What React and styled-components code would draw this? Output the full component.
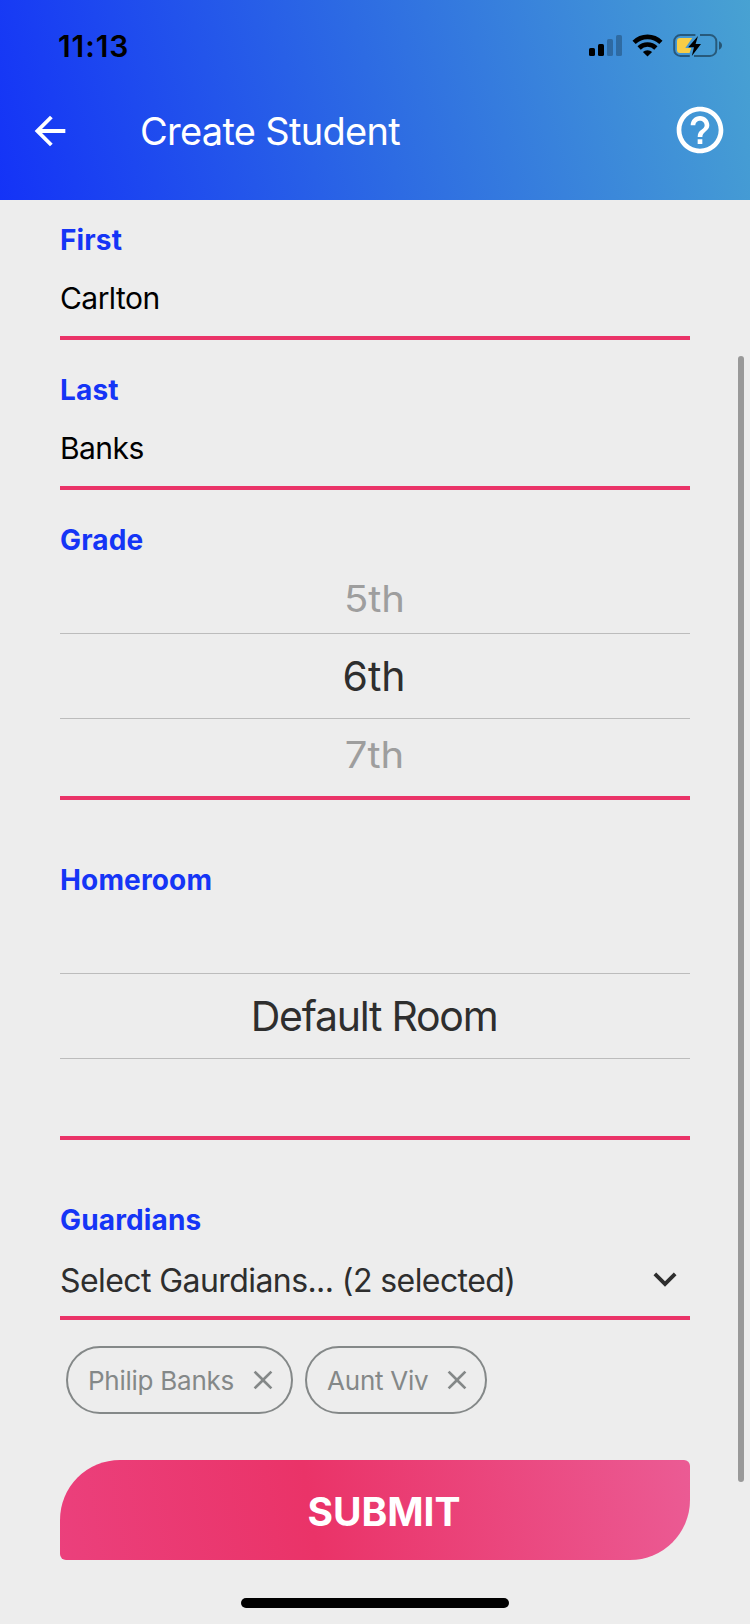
import React, { useState } from "react"
import styled, { createGlobalStyle } from 'styled-components';
import { MdArrowBack, MdClose, MdHelpOutline, MdKeyboardArrowDown } from 'react-icons/md';

const colors = {
	blue: '#1535f6',
	pink: '#ea3368',
	background: '#ededed',
	text: '#2e2e2e',
	chip: '#848888',
};

const GlobalStyle = createGlobalStyle`
	* {
		box-sizing: border-box;
	}
	body {
		margin: 0;
		background-color: ${colors.background};
		font-family: Inter, "Liberation Sans", sans-serif;
	}
	button, input {
		font-family: inherit;
		border: none;
		padding: 0;
		background: none;
		border-radius: 0;
		outline: none;
	}
	svg {
		display: block;
		flex: none;
	}
`;

const Screen = styled.div`
	position: relative;
	display: flex;
	flex-direction: column;
	width: 750px;
	height: 1624px;
	overflow: hidden;
	background-color: ${colors.background};
`;

const StatusIcons = () => (
	<svg width="136" height="28" viewBox="588 32 136 28">
		<rect x="589" y="48" width="6" height="8" rx="1.6" />
		<rect x="598" y="44" width="6" height="12" rx="1.6" />
		<rect x="607" y="39" width="6" height="17" rx="1.6" opacity="0.25" />
		<rect x="616" y="35" width="6" height="21" rx="1.6" opacity="0.25" />
		<g fill="none" stroke="#000" strokeWidth="4.6">
			<path d="M634.1 42.3a19.3 19.3 0 0 1 26.8 0" />
			<path d="M639.1 48a12 12 0 0 1 16.8 0" />
		</g>
		<path d="M642.9 52.1a6.6 6.6 0 0 1 9.2 0l-4.6 4.3z" />
		<path
			d="M695.4 35H680.5a6.3 6.3 0 0 0-6.3 6.3v8.4a6.3 6.3 0 0 0 6.3 6.3h9.3M700 35h10a6.3 6.3 0 0 1 6.3 6.3v8.4a6.3 6.3 0 0 1-6.3 6.3h-16"
			fill="none"
			stroke="#000"
			strokeOpacity="0.42"
			strokeWidth="2"
		/>
		<path d="M719 41.3c1.9.9 3 2.3 3 4.2s-1.1 3.3-3 4.2z" opacity="0.45" />
		<path d="M680 38h12.2l-6.9 10h5.9l-1.6 5H680a3 3 0 0 1-3-3v-9a3 3 0 0 1 3-3z" fill="#f7cd46" />
		<path d="M698 36l-9.8 11.2h5.8L691.8 56l9.2-12h-5.4z" />
	</svg>
);

const Header = ({ title }) => {
	return (
		<Header.Wrapper>
			<Header.Status>
				<Header.Time>11:13</Header.Time>
				<StatusIcons />
			</Header.Status>
			<Header.Bar>
				<Header.Button aria-label="Back"><MdArrowBack size={46} /></Header.Button>
				<Header.Title>{title}</Header.Title>
				<Header.Button aria-label="Help"><MdHelpOutline size={56} /></Header.Button>
			</Header.Bar>
		</Header.Wrapper>
	);
}
Header.Wrapper = styled.header`
	flex: none;
	height: 200px;
	background: linear-gradient(75deg, #1433f7 0%, #2d6be3 50%, #48a2d2 100%);
`;
Header.Status = styled.div`
	display: flex;
	justify-content: space-between;
	align-items: center;
	height: 88px;
	padding: 4px 26px 0 58px;
`;
Header.Time = styled.span`
	font-size: 30px;
	font-weight: 600;
	letter-spacing: 0.9px;
	color: black;
`;
Header.Bar = styled.div`
	display: flex;
	align-items: center;
	height: 84px;
	padding: 0 22px 0 27px;
`;
Header.Button = styled.button`
	color: white;

	&:first-child {
		padding-top: 2px;
	}
`;
Header.Title = styled.h1`
	flex: 1;
	margin: 2px 0 0 67px;
	font-size: 38px;
	font-weight: 400;
	letter-spacing: -0.7px;
	color: white;
`;

const Form = styled.form`
	display: flex;
	flex-direction: column;
	padding: 23px 60px 0;
`;

const Field = styled.div`
	display: flex;
	flex-direction: column;
	margin-bottom: ${props => props.$gap}px;
	border-bottom: 4px solid ${colors.pink};
`;

const Label = styled.label`
	height: 34px;
	line-height: 34px;
	font-size: 28px;
	font-weight: 700;
	letter-spacing: 0.15px;
	color: ${colors.blue};
`;

const Input = styled.input`
	height: 79px;
	padding-top: 2px;
	font-size: 30px;
	letter-spacing: -0.55px;
	color: black;
`;

const Picker = ({ before, selected, after, tracking = 0 }) => (
	<Picker.Wrapper>
		<Picker.Side>{before}</Picker.Side>
		<Picker.Selected $tracking={tracking}>{selected}</Picker.Selected>
		<Picker.Side>{after}</Picker.Side>
	</Picker.Wrapper>
);
Picker.Wrapper = styled.div`
	display: flex;
	flex-direction: column;
	height: 239px;
	padding-top: 6px;
	text-align: center;
`;
Picker.Side = styled.div`
	height: 70px;
	padding-right: 1px;
	line-height: 71px;
	font-size: 40px;
	color: #9e9e9e;
	transform: scaleY(0.92);
`;
Picker.Selected = styled.div`
	height: 86px;
	padding-right: 2px;
	line-height: 84px;
	border-top: 1px solid #bcbcbc;
	border-bottom: 1px solid #bcbcbc;
	font-size: 41px;
	letter-spacing: ${props => props.$tracking}px;
	color: ${colors.text};
`;

const Select = styled.button`
	display: flex;
	justify-content: space-between;
	align-items: center;
	height: 79px;
	padding: 4px 2px 0 0;
	font-size: 32px;
	letter-spacing: -0.58px;
	color: ${colors.text};
`;
Select.Value = styled.span`
	padding-top: 3px;
`;

const Chips = styled.div`
	display: flex;
	gap: 12px;
	height: 68px;
	margin: 0 6px 46px;
`;

const Chip = styled.button`
	display: flex;
	align-items: center;
	gap: 13px;
	padding: 0 12px 0 20px;
	border: 2px solid ${colors.chip};
	border-radius: 34px;
	font-size: 26px;
	letter-spacing: -0.25px;
	color: ${colors.chip};
`;

const Submit = styled.button`
	height: 100px;
	padding: 2px 0 0 18px;
	border-radius: 60px 6px 60px 6px;
	background: linear-gradient(81deg, #eb407c 0%, #ea3368 40%, #eb5b94 100%);
	font-size: 39px;
	font-weight: 700;
	color: white;
`;

const ScrollBar = styled.div`
	position: absolute;
	top: 356px;
	right: 6px;
	width: 6px;
	height: 1126px;
	border-radius: 3px;
	background-color: #999999;
`;

const HomeIndicator = styled.div`
	align-self: center;
	width: 268px;
	height: 10px;
	margin-top: 38px;
	border-radius: 5px;
	background-color: black;
`;

const App = () => {
	const [first, setFirst] = useState('Carlton');
	const [last, setLast] = useState('Banks');
	const [guardians, setGuardians] = useState(['Philip Banks', 'Aunt Viv']);

	return (
		<Screen>
			<GlobalStyle />
			<Header title="Create Student" />
			<Form onSubmit={e => e.preventDefault()}>
				<Field $gap={33}>
					<Label htmlFor="first">First</Label>
					<Input id="first" value={first} onChange={e => setFirst(e.target.value)} />
				</Field>
				<Field $gap={33}>
					<Label htmlFor="last">Last</Label>
					<Input id="last" value={last} onChange={e => setLast(e.target.value)} />
				</Field>
				<Field $gap={63}>
					<Label>Grade</Label>
					<Picker before="5th" selected="6th" after="7th" />
				</Field>
				<Field $gap={63}>
					<Label>Homeroom</Label>
					<Picker selected="Default Room" tracking={-1.25} />
				</Field>
				<Field $gap={26}>
					<Label>Guardians</Label>
					<Select type="button">
						<Select.Value>Select Gaurdians... ({guardians.length} selected)</Select.Value>
						<MdKeyboardArrowDown size={46} />
					</Select>
				</Field>
				<Chips>
					{guardians.map(name => (
						<Chip
							key={name}
							type="button"
							onClick={() => setGuardians(guardians.filter(g => g !== name))}
						>
							{name}
							<MdClose size={32} />
						</Chip>
					))}
				</Chips>
				<Submit type="submit">SUBMIT</Submit>
			</Form>
			<HomeIndicator />
			<ScrollBar />
		</Screen>
	);
}

export default App;
